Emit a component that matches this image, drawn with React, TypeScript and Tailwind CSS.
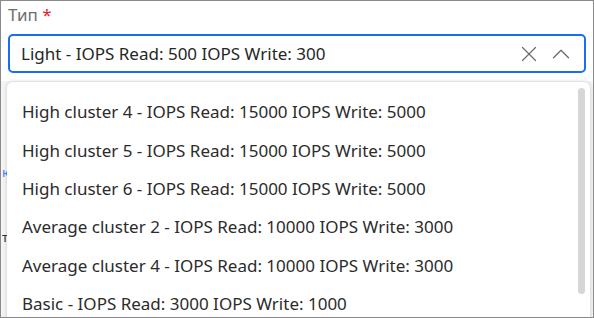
import { X, ChevronUp } from "lucide-react";

const options = [
  "High cluster 4 - IOPS Read: 15000 IOPS Write: 5000",
  "High cluster 5 - IOPS Read: 15000 IOPS Write: 5000",
  "High cluster 6 - IOPS Read: 15000 IOPS Write: 5000",
  "Average cluster 2 - IOPS Read: 10000 IOPS Write: 3000",
  "Average cluster 4 - IOPS Read: 10000 IOPS Write: 3000",
  "Basic - IOPS Read: 3000 IOPS Write: 1000",
];

export default function App() {
  return (
    <div
      className="relative h-[318px] w-[594px] overflow-hidden border border-[#8a8a8a] bg-white text-[#2b2b2b]"
      style={{ fontFamily: '"Noto Sans", "Open Sans", sans-serif' }}
    >
      <div className="px-[7px] pt-[2px]">
        <label className="block text-[17px] leading-[23px] text-[#6e6e6e]">
          Тип <span className="text-[#e0262b]">*</span>
        </label>
        <div className="mt-[8px] flex h-[39px] items-center rounded-[5px] border-2 border-[#1a6cf2] pl-[11px] pr-[8px]">
          <span className="flex-1 text-[17px] text-[#262626]">Light - IOPS Read: 500 IOPS Write: 300</span>
          <X className="mr-[4px] h-[26px] w-[26px] text-[#6b6b6b]" strokeWidth={1.1} />
          <ChevronUp className="h-[30px] w-[30px] text-[#6b6b6b]" strokeWidth={1} />
        </div>
      </div>

      {/* page content peeking out behind the open list */}
      <div className="mt-[8px] h-[240px] bg-[#f4f4f4]">
        <div className="pl-[1px] pt-[85px] text-[13px] leading-none text-[#3b82f6]">к</div>
        <div className="pl-[1px] pt-[52px] text-[13px] leading-none text-[#333]">т</div>
      </div>

      <div className="absolute left-[6px] top-[81px] h-[260px] w-[583px] rounded-[6px] bg-white shadow-[0_0_4px_rgba(0,0,0,0.18)]">
        <ul className="pt-[11px]">
          {options.map((o) => (
            <li key={o} className="flex h-[38.3px] items-center pl-[15px] text-[17px] text-[#2b2b2b]">
              {o}
            </li>
          ))}
        </ul>
        <div className="absolute right-[5px] top-[6px] h-[206px] w-[7px] rounded-full bg-[#d6d6d6]" />
      </div>
    </div>
  );
}
